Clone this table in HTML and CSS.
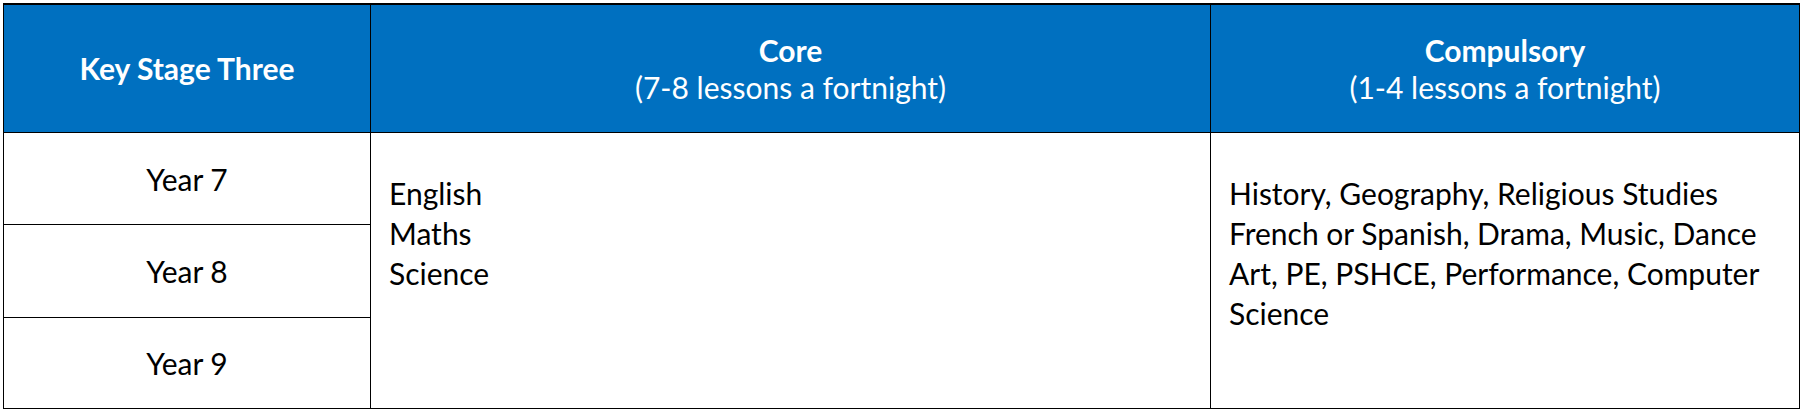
FILE: index.html
```html
<!DOCTYPE html>
<html>
<head>
<meta charset="utf-8">
<link rel="stylesheet" href="styles.css">
</head>
<body>
<table class="plan">
  <colgroup>
    <col class="c1">
    <col class="c2">
    <col class="c3">
  </colgroup>
  <thead>
    <tr class="head">
      <th><b>Key Stage Three</b></th>
      <th><b>Core</b><br><span class="sub">(7-8 lessons a fortnight)</span></th>
      <th><b>Compulsory</b><br><span class="sub">(1-4 lessons a fortnight)</span></th>
    </tr>
  </thead>
  <tbody>
    <tr class="r1">
      <td class="year">Year 7</td>
      <td class="list" rowspan="3">English<br>Maths<br>Science</td>
      <td class="list" rowspan="3">History, Geography, Religious Studies<br>French or Spanish, Drama, Music, Dance<br>Art, PE, PSHCE, Performance, Computer Science</td>
    </tr>
    <tr class="r2"><td class="year">Year 8</td></tr>
    <tr class="r3"><td class="year">Year 9</td></tr>
  </tbody>
</table>
</body>
</html>
```

FILE: styles.css
```css
html, body {
  margin: 0;
  padding: 0;
  background: #ffffff;
}
body {
  padding: 3px 0 0 3px;
  font-family: Lato, "Open Sans", sans-serif;
  color: #000;
}
.plan {
  border-collapse: collapse;
  table-layout: fixed;
  width: 1796px;
  border: 1.5px solid #000;
  border-top-width: 2px;
}
.c1 { width: 367px; }
.c2 { width: 840px; }
.c3 { width: 589px; }
.plan th, .plan td {
  border: 1.5px solid #000;
  padding: 0;
}
.plan .head th {
  background: #0070c0;
  color: #fff;
  height: 127px;
  font-size: 30px;
  line-height: 37px;
  font-weight: normal;
  text-align: center;
  vertical-align: middle;
}
.head b { font-weight: 700; }
.plan .year {
  font-size: 30px;
  text-align: center;
  vertical-align: middle;
}
.r1 .year { height: 91px; }
.r2 .year { height: 92px; }
.r3 .year { height: 90px; }
.plan .list {
  font-size: 30px;
  line-height: 40px;
  vertical-align: top;
  padding: 40px 24px 0 18px;
}
```
